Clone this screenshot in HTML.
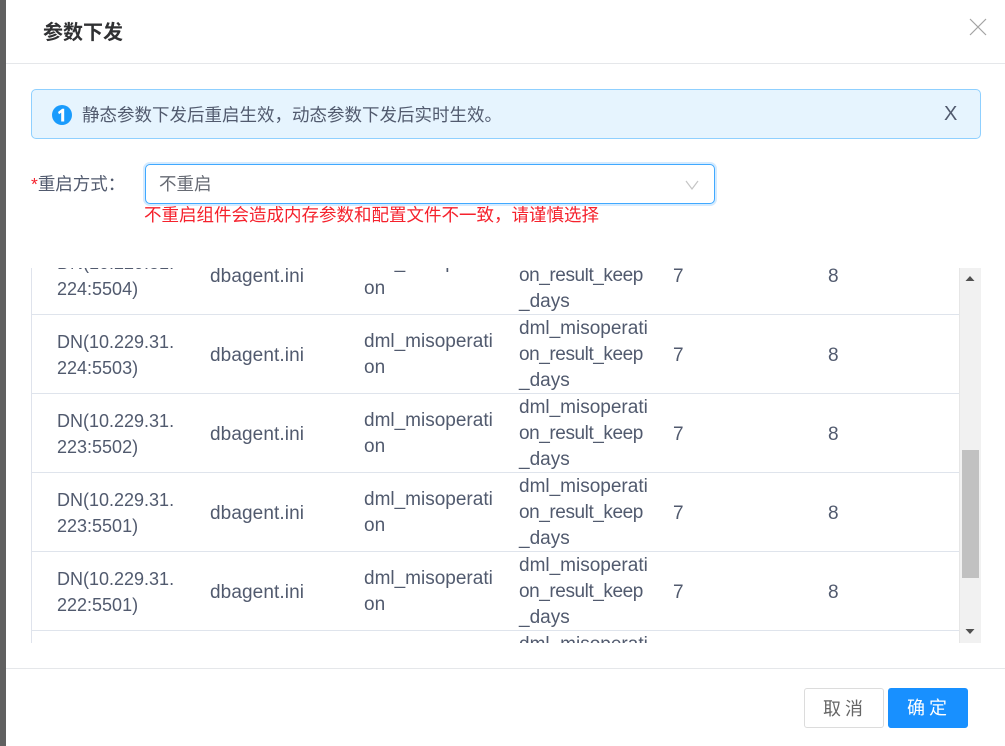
<!DOCTYPE html>
<html lang="zh-CN">
<head>
<meta charset="utf-8">
<title>参数下发</title>
<style>
html,body{margin:0;padding:0;background:#fff}
body{position:relative;width:1005px;height:746px;overflow:hidden;font-family:"Liberation Sans","Noto Sans CJK SC",sans-serif;color:#515a6e}
.abs{position:absolute}
.cn{font-size:17.5px;line-height:26px;white-space:nowrap}
#stripe{left:0;top:0;width:6px;height:746px;background:#606060}
#title{left:43px;top:18px;font-size:20px;line-height:30px;font-weight:700;color:#303133;white-space:nowrap}
.hr{left:6px;width:999px;height:1px;background:#e5e7ea}
#alert{left:31px;top:89px;width:948px;height:48px;background:#e6f4fe;border:1px solid #8fd0ff;border-radius:5px}
#scroll{left:31px;top:268px;width:950px;height:375px;overflow:hidden}
#lb{left:0;top:0;width:1px;height:375px;background:#dfe3ec}
.row{position:absolute;left:1px;width:927px;height:78px;border-bottom:1px solid #dfe4ec}
.c{position:absolute;font-size:19px;line-height:26px;white-space:nowrap}
.c1{left:25px;top:14px;font-size:18px}
.c2{left:178px;top:28px;letter-spacing:.1px}
.c3{left:332px;top:14px}
.c4{left:487px;top:1px}
.c4 span{letter-spacing:-.43px}
.c5{left:641px;top:28px}
.c6{left:796px;top:28px}
#track{left:959px;top:268px;width:22px;height:375px;background:#f1f1f1;border-left:1px solid #e6e6e6;box-sizing:border-box}
#thumb{left:962px;top:450px;width:17px;height:128px;background:#c1c1c1}
.btn{top:688px;width:80px;height:40px;box-sizing:border-box;border-radius:3px;text-align:center;font-size:18px;line-height:40px;letter-spacing:4px;text-indent:2px}
</style>
</head>
<body>
<div class="abs" id="stripe"></div>
<div class="abs" id="title">参数下发</div>
<svg class="abs" style="left:969px;top:18px" width="18" height="18" viewBox="0 0 18 18"><path d="M1 1L17 17M17 1L1 17" stroke="#a3a3a3" stroke-width="1.2" fill="none"/></svg>
<div class="abs hr" style="top:63px"></div>

<div class="abs" id="alert"></div>
<svg class="abs" style="left:52px;top:105px" width="20" height="20" viewBox="0 0 20 20"><circle cx="10" cy="10" r="10" fill="#1a9bfc"/><path d="M6 7L10.2 3.8H12.2V16.5H9.2V7.6L7 9.2Z" fill="#fff"/></svg>
<div class="abs cn" style="left:82px;top:102px">静态参数下发后重启生效&#xFF0C;动态参数下发后实时生效。</div>
<div class="abs cn" style="left:944px;top:101px;font-size:20px;color:#515a6e">X</div>

<div class="abs cn" style="left:31px;top:171px"><span style="color:#f5222d">*</span>重启方式&#xFF1A;</div>
<div class="abs" style="left:145px;top:164px;width:570px;height:40px;box-sizing:border-box;border:1px solid #40a9ff;border-radius:5px;box-shadow:0 0 0 2px rgba(24,144,255,.18);background:#fff"></div>
<div class="abs cn" style="left:160px;top:171px;color:#666a73;margin-left:-1px">不重启</div>
<svg class="abs" style="left:685px;top:179px" width="14" height="12" viewBox="0 0 14 12"><path d="M1 2L7 10L13 2" stroke="#c5c5c5" stroke-width="1.2" fill="none"/></svg>
<div class="abs cn" style="left:144px;top:202px;line-height:27px;color:#f5222d">不重启组件会造成内存参数和配置文件不一致&#xFF0C;请谨慎选择</div>

<div class="abs" id="scroll">
  <div class="abs" id="lb"></div>
  <div class="row" style="top:-32px"><div class="c c1">DN(10.229.31.<br>224:5504)</div><div class="c c2">dbagent.ini</div><div class="c c3">dml_misoperati<br>on</div><div class="c c4">dml_misoperati<br><span>on_result_keep</span><br>_days</div><div class="c c5">7</div><div class="c c6">8</div></div>
  <div class="row" style="top:47px"><div class="c c1">DN(10.229.31.<br>224:5503)</div><div class="c c2">dbagent.ini</div><div class="c c3">dml_misoperati<br>on</div><div class="c c4">dml_misoperati<br><span>on_result_keep</span><br>_days</div><div class="c c5">7</div><div class="c c6">8</div></div>
  <div class="row" style="top:126px"><div class="c c1">DN(10.229.31.<br>223:5502)</div><div class="c c2">dbagent.ini</div><div class="c c3">dml_misoperati<br>on</div><div class="c c4">dml_misoperati<br><span>on_result_keep</span><br>_days</div><div class="c c5">7</div><div class="c c6">8</div></div>
  <div class="row" style="top:205px"><div class="c c1">DN(10.229.31.<br>223:5501)</div><div class="c c2">dbagent.ini</div><div class="c c3">dml_misoperati<br>on</div><div class="c c4">dml_misoperati<br><span>on_result_keep</span><br>_days</div><div class="c c5">7</div><div class="c c6">8</div></div>
  <div class="row" style="top:284px"><div class="c c1">DN(10.229.31.<br>222:5501)</div><div class="c c2">dbagent.ini</div><div class="c c3">dml_misoperati<br>on</div><div class="c c4">dml_misoperati<br><span>on_result_keep</span><br>_days</div><div class="c c5">7</div><div class="c c6">8</div></div>
  <div class="row" style="top:363px"><div class="c c4">dml_misoperati<br><span>on_result_keep</span><br>_days</div></div>
</div>
<div class="abs" id="track"></div>
<div class="abs" id="thumb"></div>
<svg class="abs" style="left:965px;top:275px" width="10" height="7" viewBox="0 0 10 7"><path d="M5 1L9.5 6H.5Z" fill="#505050"/></svg>
<svg class="abs" style="left:965px;top:628px" width="10" height="7" viewBox="0 0 10 7"><path d="M.5 1H9.5L5 6Z" fill="#505050"/></svg>

<div class="abs hr" style="top:668px"></div>
<div class="abs btn" style="left:804px;border:1px solid #dcdcdc;color:#666">取消</div>
<div class="abs btn" style="left:888px;background:#1890ff;color:#fff">确定</div>
</body>
</html>
